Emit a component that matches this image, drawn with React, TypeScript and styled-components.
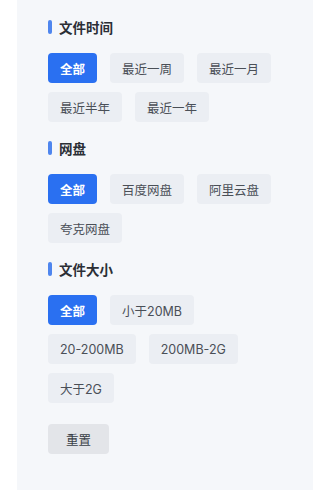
import React from "react";
import styled, { createGlobalStyle } from "styled-components";

const Global = createGlobalStyle`
  html, body { margin: 0; padding: 0; background: #ffffff; }
  body { font-family: Inter, "Noto Sans CJK SC", "Noto Sans", sans-serif; }
`;

const Page = styled.div`
  width: 313px;
  height: 500px;
  padding-left: 17px;
  box-sizing: border-box;
  overflow: hidden;
`;

const Panel = styled.div`
  background: #f5f7fa;
  height: 490px;
  padding: 17px 0 0 31px;
  box-sizing: border-box;
  display: flex;
  flex-direction: column;
  gap: 16px;
`;

const Section = styled.section`
  display: flex;
  flex-direction: column;
  gap: 16px;
`;

const Title = styled.div`
  display: flex;
  align-items: center;
  gap: 7px;
  height: 20px;
  font-size: 13.5px;
  font-weight: 700;
  color: #2b2f36;
  &::before {
    content: "";
    width: 4px;
    height: 14px;
    border-radius: 2px;
    background: #4f86ee;
  }
`;

const Options = styled.div`
  display: flex;
  flex-wrap: wrap;
  column-gap: 13px;
  row-gap: 9px;
  width: 240px;
`;

const Chip = styled.button<{ $active?: boolean }>`
  height: 30px;
  padding: 0 12px;
  border: none;
  border-radius: 4px;
  font-family: inherit;
  font-size: 12.5px;
  font-weight: ${(p) => (p.$active ? 700 : 400)};
  color: ${(p) => (p.$active ? "#ffffff" : "#4a4f57")};
  background: ${(p) => (p.$active ? "#2a70f1" : "#ebeef3")};
  cursor: pointer;
`;

const Reset = styled.button`
  margin-top: 5px;
  align-self: flex-start;
  width: 61px;
  height: 30px;
  border: none;
  border-radius: 4px;
  background: #e3e5e9;
  color: #3a3f47;
  font-family: inherit;
  font-size: 12.5px;
`;

const groups = [
  { title: "文件时间", items: ["全部", "最近一周", "最近一月", "最近半年", "最近一年"] },
  { title: "网盘", items: ["全部", "百度网盘", "阿里云盘", "夸克网盘"] },
  { title: "文件大小", items: ["全部", "小于20MB", "20-200MB", "200MB-2G", "大于2G"] },
];

export default function App() {
  return (
    <>
      <Global />
      <Page>
        <Panel>
          {groups.map((g) => (
            <Section key={g.title}>
              <Title>{g.title}</Title>
              <Options>
                {g.items.map((it, i) => (
                  <Chip key={it} $active={i === 0}>
                    {it}
                  </Chip>
                ))}
              </Options>
            </Section>
          ))}
          <Reset>重置</Reset>
        </Panel>
      </Page>
    </>
  );
}
